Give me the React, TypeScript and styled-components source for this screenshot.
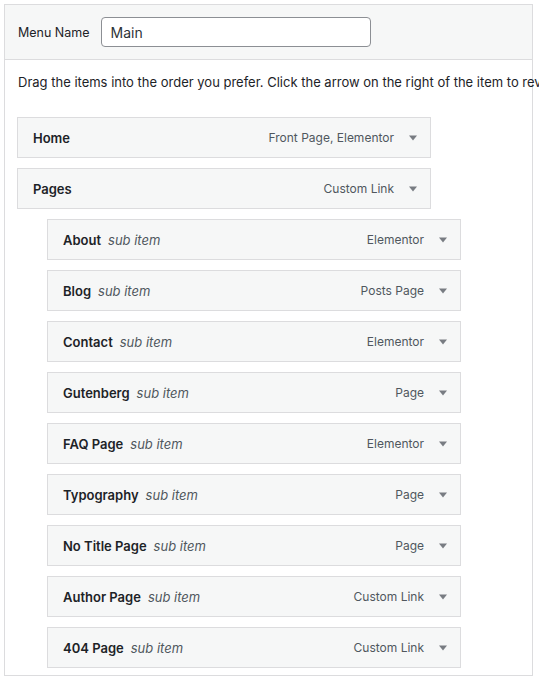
import React from "react";
import styled, { createGlobalStyle } from "styled-components";

const Global = createGlobalStyle`
  html { overflow: hidden; }
  html, body { margin: 0; padding: 0; background: #ffffff; }
  body {
    font-family: Inter, "Liberation Sans", Arial, sans-serif;
    font-size: 13px;
    color: #1d2327;
  }
`;

const Frame = styled.div`
  margin: 4px 6px 0 4px;
  width: 529px;
  height: 672px;
  box-sizing: border-box;
  border: 1px solid #dcdcde;
  background: #ffffff;
`;

const Header = styled.div`
  display: flex;
  align-items: center;
  gap: 11px;
  padding: 12px 12px 12px 13px;
  background: #f6f7f7;
  border-bottom: 1px solid #dcdcde;
`;

const Label = styled.label`
  font-size: 12.5px;
  color: #1d2327;
`;

const NameInput = styled.input`
  width: 270px;
  height: 30px;
  box-sizing: border-box;
  border: 1px solid #8c8f94;
  border-radius: 4px;
  padding: 0 9px;
  font-family: inherit;
  font-size: 14px;
  color: #2c3338;
  background: #ffffff;
`;

const Body = styled.div`
  padding: 13px 0 0 12px;
`;

const Hint = styled.p`
  margin: 0 0 25px 1px;
  white-space: nowrap;
  line-height: 19px;
  color: #1d2327;
`;

const List = styled.div`
  display: flex;
  flex-direction: column;
  gap: 10px;
`;

const Item = styled.div<{ $depth: number }>`
  display: flex;
  align-items: center;
  width: 414px;
  height: 41px;
  box-sizing: border-box;
  margin-left: ${(p) => p.$depth * 30}px;
  padding: 0 13px 0 15px;
  background: #f6f7f7;
  border: 1px solid #dcdcde;
`;

const Title = styled.span`
  font-weight: 600;
  color: #1d2327;
`;

const Sub = styled.span`
  margin-left: 7px;
  font-style: italic;
  color: #50575e;
`;

const Type = styled.span`
  margin-left: auto;
  font-size: 12px;
  color: #50575e;
`;

const Arrow = styled.svg`
  margin-left: 15px;
  width: 8px;
  height: 6px;
  fill: #787c82;
`;

const items: { title: string; type: string; depth: number }[] = [
  { title: "Home", type: "Front Page, Elementor", depth: 0 },
  { title: "Pages", type: "Custom Link", depth: 0 },
  { title: "About", type: "Elementor", depth: 1 },
  { title: "Blog", type: "Posts Page", depth: 1 },
  { title: "Contact", type: "Elementor", depth: 1 },
  { title: "Gutenberg", type: "Page", depth: 1 },
  { title: "FAQ Page", type: "Elementor", depth: 1 },
  { title: "Typography", type: "Page", depth: 1 },
  { title: "No Title Page", type: "Page", depth: 1 },
  { title: "Author Page", type: "Custom Link", depth: 1 },
  { title: "404 Page", type: "Custom Link", depth: 1 },
];

export default function App() {
  return (
    <>
      <Global />
      <Frame>
        <Header>
          <Label htmlFor="menu-name">Menu Name</Label>
          <NameInput id="menu-name" defaultValue="Main" />
        </Header>
        <Body>
          <Hint>
            Drag the items into the order you prefer. Click the arrow on the right of the item to reveal additional configuration options.
          </Hint>
          <List>
            {items.map((it) => (
              <Item key={it.title} $depth={it.depth}>
                <Title>{it.title}</Title>
                {it.depth > 0 && <Sub>sub item</Sub>}
                <Type>{it.type}</Type>
                <Arrow viewBox="0 0 8 6">
                  <path d="M0 0.5 H8 L4 5.5 Z" />
                </Arrow>
              </Item>
            ))}
          </List>
        </Body>
      </Frame>
    </>
  );
}
